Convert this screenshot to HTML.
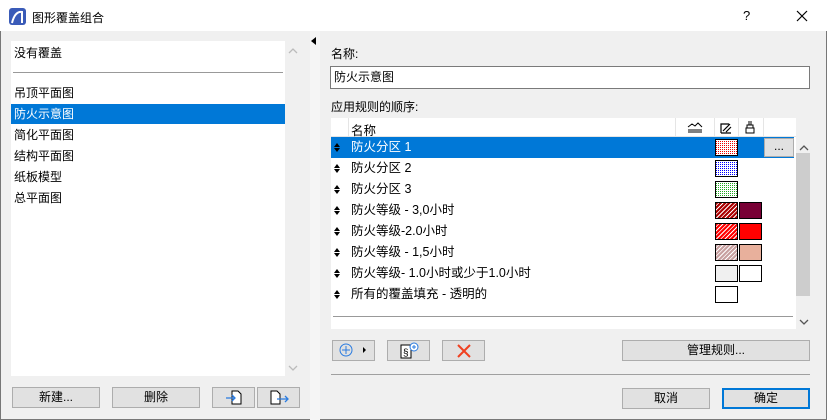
<!DOCTYPE html>
<html><head><meta charset="utf-8"><style>
*{box-sizing:border-box;margin:0;padding:0}
body{width:827px;height:420px;background:#f0f0f0;font-family:"Liberation Sans","Noto Sans CJK SC",sans-serif;font-size:12px;color:#000;position:relative;overflow:hidden;border:1px solid #777}
.a{position:absolute}
.btn{position:absolute;background:#e1e1e1;border:1px solid #adadad;text-align:center;line-height:18px;font-size:12px}
.row{position:absolute;left:0;width:463px;height:21px;line-height:21px;font-size:12.5px}
.row .ar{position:absolute;left:3px;top:6px;width:6px;height:9px}
.row .t{position:absolute;left:20px}
.sw{position:absolute;width:23px;height:17px;border:1px solid #000;top:2px}
.li{position:absolute;left:0;width:274px;height:20px;line-height:20px;padding-left:3px}
</style></head><body>
<div class="a" style="left:-1px;top:-1px;width:827px;height:31px;background:#fff"></div>
<svg class="a" style="left:8px;top:7px" width="17" height="17"><rect width="17" height="17" rx="3" fill="#3a5bb8"/><path d="M3 15 Q6 3 13 4 L13 15" fill="none" stroke="#fff" stroke-width="2"/></svg>
<div class="a" style="left:31px;top:8px;font-size:12px">图形覆盖组合</div>
<div class="a" style="left:742px;top:7px;font-size:13px">?</div>
<svg class="a" style="left:795px;top:9px" width="12" height="12"><path d="M1 1L11 11M11 1L1 11" stroke="#000" stroke-width="1.2"/></svg>

<div class="a" style="left:10px;top:40px;width:274px;height:335px;background:#fff">
<div class="li" style="top:2px">没有覆盖</div>
<div class="a" style="left:2px;top:31px;width:270px;height:1px;background:#999"></div>
<div class="li" style="top:42px">吊顶平面图</div>
<div class="li" style="top:63px;background:#0078d7;color:#fff">防火示意图</div>
<div class="li" style="top:84px">简化平面图</div>
<div class="li" style="top:105px">结构平面图</div>
<div class="li" style="top:126px">纸板模型</div>
<div class="li" style="top:147px">总平面图</div>
</div>
<svg class="a" style="left:287px;top:47px" width="10" height="6"><path d="M1 5l4-4 4 4" fill="none" stroke="#bbb" stroke-width="1.3"/></svg>
<svg class="a" style="left:287px;top:364px" width="10" height="6"><path d="M1 1l4 4 4-4" fill="none" stroke="#bbb" stroke-width="1.3"/></svg>
<div class="a" style="left:309px;top:30px;width:10px;height:389px;background:#f5f5f5"></div>
<svg class="a" style="left:310px;top:36px" width="6" height="8"><path d="M5 0v8L0 4z" fill="#000"/></svg>

<div class="btn" style="left:11px;top:386px;width:88px;height:21px">新建...</div>
<div class="btn" style="left:111px;top:386px;width:88px;height:21px">删除</div>
<div class="btn" style="left:211px;top:386px;width:43px;height:21px"><svg width="20" height="17" style="margin-top:1px"><path d="M8 2h6l3 3v10H8z" fill="#fff" stroke="#000"/><path d="M2 9h9M8 6l3 3-3 3" fill="none" stroke="#2a7be0" stroke-width="1.3"/></svg></div>
<div class="btn" style="left:256px;top:386px;width:43px;height:21px"><svg width="22" height="17" style="margin-top:1px"><path d="M3 2h6l3 3v10H3z" fill="#fff" stroke="#000"/><path d="M9 10h11M17 7l3 3-3 3" fill="none" stroke="#2a7be0" stroke-width="1.3"/></svg></div>

<div class="a" style="left:330px;top:44px">名称:</div>
<div class="a" style="left:329px;top:65px;width:480px;height:23px;background:#fff;border:1px solid #7a7a7a;padding-left:3px;line-height:21px">防火示意图</div>
<div class="a" style="left:330px;top:97px">应用规则的顺序:</div>

<div class="a" style="left:330px;top:117px;width:465px;height:211px;background:#fff;overflow:hidden">
<div class="a" style="left:0;top:0;width:465px;height:19px;border-bottom:1px solid #e5e5e5"></div>
<div class="a" style="left:17px;top:0;width:1px;height:19px;background:#e5e5e5"></div>
<div class="a" style="left:344px;top:0;width:1px;height:19px;background:#e5e5e5"></div>
<div class="a" style="left:383px;top:0;width:1px;height:19px;background:#e5e5e5"></div>
<div class="a" style="left:407px;top:0;width:1px;height:19px;background:#e5e5e5"></div>
<div class="a" style="left:432px;top:0;width:1px;height:19px;background:#e5e5e5"></div>
<div class="a" style="left:20px;top:2px;font-size:12.5px">名称</div>
<svg class="a" style="left:356px;top:3px" width="16" height="12"><path d="M1 6 L5 3 L8 5 L11 2 L15 6 M1 9h14M1 11h14" fill="none" stroke="#000"/></svg>
<svg class="a" style="left:388px;top:3px" width="14" height="13"><path d="M2 12V3h8M2 12h10M4 10l7-7M7 11l5-5" fill="none" stroke="#000" stroke-width="1.2"/></svg>
<svg class="a" style="left:413px;top:2px" width="12" height="14"><path d="M5 1v4M7 1v4M3 5h6v3H3zM2 8h8v5H2z" fill="none" stroke="#000"/></svg>
<div class="row" style="top:19px;background:#0078d7;color:#fff"><svg class="ar"><path d="M0 4L3 0 6 4zM0 5l3 4 3-4z" fill="#000"/></svg><span class="t">防火分区 1</span><div class="sw" style="left:384px;background:repeating-linear-gradient(0deg,#fff 0 1px,transparent 1px 2px),repeating-linear-gradient(90deg,#e00 0 1px,#fff 1px 2px)"></div></div>
<div class="a" style="left:433px;top:20px;width:30px;height:19px;background:#e1e1e1;border:1px solid #adadad;text-align:center;line-height:14px">...</div>
<div class="row" style="top:40px"><svg class="ar"><path d="M0 4L3 0 6 4zM0 5l3 4 3-4z" fill="#000"/></svg><span class="t">防火分区 2</span><div class="sw" style="left:384px;background:repeating-linear-gradient(0deg,#fff 0 1px,transparent 1px 2px),repeating-linear-gradient(90deg,#00f 0 1px,#fff 1px 2px)"></div></div>
<div class="row" style="top:61px"><svg class="ar"><path d="M0 4L3 0 6 4zM0 5l3 4 3-4z" fill="#000"/></svg><span class="t">防火分区 3</span><div class="sw" style="left:384px;background:repeating-linear-gradient(0deg,#fff 0 1px,transparent 1px 2px),repeating-linear-gradient(90deg,#2a2 0 1px,#fff 1px 2px)"></div></div>
<div class="row" style="top:82px"><svg class="ar"><path d="M0 4L3 0 6 4zM0 5l3 4 3-4z" fill="#000"/></svg><span class="t">防火等级 - 3,0小时</span><div class="sw" style="left:384px;background:repeating-linear-gradient(-45deg,#a00 0 2px,#fff 2px 3px)"></div><div class="sw" style="left:408px;background:#780035"></div></div>
<div class="row" style="top:103px"><svg class="ar"><path d="M0 4L3 0 6 4zM0 5l3 4 3-4z" fill="#000"/></svg><span class="t">防火等级-2.0小时</span><div class="sw" style="left:384px;background:repeating-linear-gradient(-45deg,#f00 0 2px,#fff 2px 3px)"></div><div class="sw" style="left:408px;background:#f00"></div></div>
<div class="row" style="top:124px"><svg class="ar"><path d="M0 4L3 0 6 4zM0 5l3 4 3-4z" fill="#000"/></svg><span class="t">防火等级 - 1,5小时</span><div class="sw" style="left:384px;background:repeating-linear-gradient(-45deg,#c8a0a0 0 2px,#fff 2px 3px)"></div><div class="sw" style="left:408px;background:#e8b09c"></div></div>
<div class="row" style="top:145px"><svg class="ar"><path d="M0 4L3 0 6 4zM0 5l3 4 3-4z" fill="#000"/></svg><span class="t">防火等级- 1.0小时或少于1.0小时</span><div class="sw" style="left:384px;background:#f0f0f0"></div><div class="sw" style="left:408px;background:#fff"></div></div>
<div class="row" style="top:166px"><svg class="ar"><path d="M0 4L3 0 6 4zM0 5l3 4 3-4z" fill="#000"/></svg><span class="t">所有的覆盖填充 - 透明的</span><div class="sw" style="left:384px;background:#fff"></div></div>
<div class="a" style="left:2px;top:198px;width:460px;height:1px;background:#999"></div>
</div>
<div class="a" style="left:795px;top:117px;width:14px;height:211px;background:#f0f0f0"></div>
<div class="a" style="left:795px;top:152px;width:14px;height:143px;background:#cdcdcd"></div>
<svg class="a" style="left:798px;top:144px" width="10" height="6"><path d="M1 5l4-4 4 4" fill="none" stroke="#555" stroke-width="1.3"/></svg>
<svg class="a" style="left:798px;top:318px" width="10" height="6"><path d="M1 1l4 4 4-4" fill="none" stroke="#555" stroke-width="1.3"/></svg>

<div class="btn" style="left:331px;top:339px;width:43px;height:21px"><svg width="30" height="15" style="margin-top:2px"><circle cx="7" cy="7" r="6" fill="none" stroke="#2a7be0"/><path d="M7 3v8M3 7h8" stroke="#2a7be0"/><path d="M24 4l3 3-3 3z" fill="#000"/></svg></div>
<div class="btn" style="left:386px;top:339px;width:43px;height:21px"><svg width="24" height="17" style="margin-top:1px"><rect x="4" y="3" width="10" height="13" fill="#fff" stroke="#000"/><text x="6" y="14" font-size="10" font-family="Liberation Sans">§</text><circle cx="17" cy="5" r="4" fill="#fff" stroke="#2a7be0"/><path d="M17 3v4M15 5h4" stroke="#2a7be0"/></svg></div>
<div class="btn" style="left:441px;top:339px;width:43px;height:21px"><svg width="14" height="14" style="margin-top:3px"><path d="M1 1L13 13M13 1L1 13" stroke="#f04020" stroke-width="2"/></svg></div>
<div class="btn" style="left:621px;top:339px;width:188px;height:21px">管理规则...</div>
<div class="a" style="left:330px;top:373px;width:479px;height:1px;background:#a0a0a0"></div>
<div class="btn" style="left:621px;top:387px;width:88px;height:21px">取消</div>
<div class="btn" style="left:721px;top:387px;width:88px;height:21px;border:2px solid #0078d7;line-height:17px">确定</div>
</body></html>
